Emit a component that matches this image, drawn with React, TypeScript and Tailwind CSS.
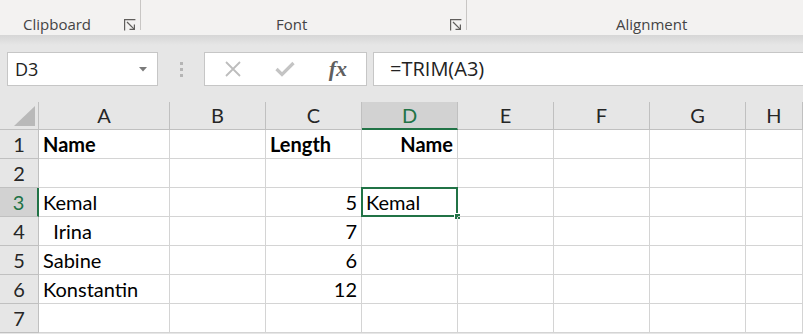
const COLS = ["A", "B", "C", "D", "E", "F", "G", "H"];

type Cell = { text?: string; bold?: boolean; right?: boolean };

const ROWS: Record<number, Record<string, Cell>> = {
  1: { A: { text: "Name", bold: true }, C: { text: "Length", bold: true }, D: { text: "Name", bold: true, right: true } },
  2: {},
  3: { A: { text: "Kemal" }, C: { text: "5", right: true }, D: { text: "Kemal" } },
  4: { A: { text: "\u00a0\u00a0Irina" }, C: { text: "7", right: true } },
  5: { A: { text: "Sabine" }, C: { text: "6", right: true } },
  6: { A: { text: "Konstantin" }, C: { text: "12", right: true } },
  7: {},
};

function Launcher() {
  return (
    <svg width="12" height="12" viewBox="0 0 12 12" fill="none" stroke="#605e5c" strokeWidth="1.2">
      <path d="M0.6 11.4 V0.6 H11.4" />
      <path d="M3 3 L10.4 10.4" />
      <path d="M10.4 5.5 V10.4 H5.5" />
    </svg>
  );
}

function Sep() {
  return <div className="h-[30px] w-px bg-[#c8c6c4]" />;
}

function Ribbon() {
  return (
    <div className="flex h-[35px] bg-[#f3f2f1] font-['Open_Sans',sans-serif] text-[15px] text-[#444]">
      <div className="relative flex h-[35px] w-[140px] pl-[23px] pr-[4px]">
        <span className="mt-[15px] leading-[19px]">Clipboard</span>
        <span className="ml-auto mt-[19px]"><Launcher /></span>
      </div>
      <Sep />
      <div className="flex h-[35px] w-[325px] pl-[135px] pr-[4px]">
        <span className="mt-[15px] leading-[19px]">Font</span>
        <span className="ml-auto mt-[19px]"><Launcher /></span>
      </div>
      <Sep />
      <div className="flex h-[35px] flex-1 pl-[149px]">
        <span className="mt-[15px] leading-[19px]">Alignment</span>
      </div>
    </div>
  );
}

function FormulaBar() {
  return (
    <div>
      <div className="h-[10px] bg-gradient-to-b from-[#d6d6d6] to-[#e6e6e6]" />
      <div className="flex h-[57px] pt-[7px] font-['Open_Sans',sans-serif]">
        <div className="ml-[7px] flex h-[34px] w-[151px] items-center border border-[#c6c6c6] bg-white pl-[7px] pr-[10px]">
          <span className="text-[18px] leading-none text-[#222]">D3</span>
          <svg className="ml-auto" width="8" height="5" viewBox="0 0 8 5">
            <path d="M0 0 H8 L4 4.5 Z" fill="#7a7a7a" />
          </svg>
        </div>
        <div className="ml-[21px] flex h-[34px] w-[4px] flex-col items-center justify-center gap-[3px]">
          <span className="h-[3px] w-[3px] bg-[#b5b5b5]" />
          <span className="h-[3px] w-[3px] bg-[#b5b5b5]" />
          <span className="h-[3px] w-[3px] bg-[#b5b5b5]" />
        </div>
        <div className="ml-[21px] flex h-[34px] w-[163px] items-center border border-[#c6c6c6] bg-white px-[2px]">
          <div className="flex w-[54px] justify-center">
            <svg width="16" height="16" viewBox="0 0 16 16" stroke="#bdbdbd" strokeWidth="1.8">
              <path d="M1 1 L15 15 M15 1 L1 15" />
            </svg>
          </div>
          <div className="flex w-[54px] justify-center">
            <svg width="20" height="16" viewBox="0 0 20 16" fill="none" stroke="#c4c4c4" strokeWidth="3.2">
              <path d="M1.5 8 L7 13.5 L18.5 2" />
            </svg>
          </div>
          <div className="flex w-[54px] justify-center">
            <span className="font-['Liberation_Serif',serif] text-[22px] font-bold italic leading-none text-[#5f5f5f]">fx</span>
          </div>
        </div>
        <div className="ml-[6px] flex h-[34px] flex-1 items-center border border-r-0 border-[#c6c6c6] bg-white pl-[16px]">
          <span className="text-[20px] leading-none text-[#222]">=TRIM(A3)</span>
        </div>
      </div>
    </div>
  );
}

function Grid() {
  return (
    <div className="grid grid-cols-[39px_131px_96px_96px_96px_96px_96px_96px_1fr] grid-rows-[28px_repeat(7,29px)] bg-white font-['Lato',sans-serif] text-[20px] text-black">
      <div className="relative border-b border-r border-[#c0c0c0] bg-[#e6e6e6]">
        <svg className="absolute bottom-[3px] right-[3px]" width="21" height="20" viewBox="0 0 21 20">
          <path d="M21 0 V20 H0 Z" fill="#b9b9b9" />
        </svg>
      </div>
      {COLS.map((c) => (
        <div
          key={c}
          className={
            c === "D"
              ? "flex items-end justify-center border-b-2 border-r border-b-[#217346] border-r-[#c0c0c0] bg-[#d2d2d2] pb-[3px] leading-none text-[#217346]"
              : "flex items-end justify-center border-b border-r border-[#c0c0c0] bg-[#e6e6e6] pb-[4px] leading-none text-[#262626]"
          }
        >
          {c}
        </div>
      ))}
      {[1, 2, 3, 4, 5, 6, 7].map((r) => (
        <Row key={r} r={r} />
      ))}
    </div>
  );
}

function Row({ r }: { r: number }) {
  const sel = r === 3;
  return (
    <>
      <div
        className={
          sel
            ? "flex items-end justify-center border-b border-r-2 border-b-[#c0c0c0] border-r-[#217346] bg-[#d2d2d2] pb-[4px] leading-none text-[#217346]"
            : "flex items-end justify-center border-b border-r border-[#c0c0c0] bg-[#e6e6e6] pb-[4px] leading-none text-[#262626]"
        }
      >
        {r}
      </div>
      {COLS.map((c) => {
        const cell = ROWS[r][c];
        return (
          <div
            key={c}
            className={`relative flex items-end whitespace-pre border-b border-r border-[#d4d4d4] px-[4px] pb-[4px] leading-none ${
              cell?.right ? "justify-end" : "justify-start"
            } ${cell?.bold ? "font-bold" : ""}`}
          >
            {cell?.text}
            {sel && c === "D" && (
              <div className="absolute -left-px -top-px bottom-[-1px] right-[-1px] border-2 border-[#217346]">
                <span className="absolute bottom-[-5px] right-[-5px] h-[7px] w-[7px] border border-white bg-[#217346]" />
              </div>
            )}
          </div>
        );
      })}
    </>
  );
}

export default function App() {
  return (
    <div className="h-[334px] w-[803px] overflow-hidden bg-[#e6e6e6]">
      <Ribbon />
      <FormulaBar />
      <Grid />
    </div>
  );
}
